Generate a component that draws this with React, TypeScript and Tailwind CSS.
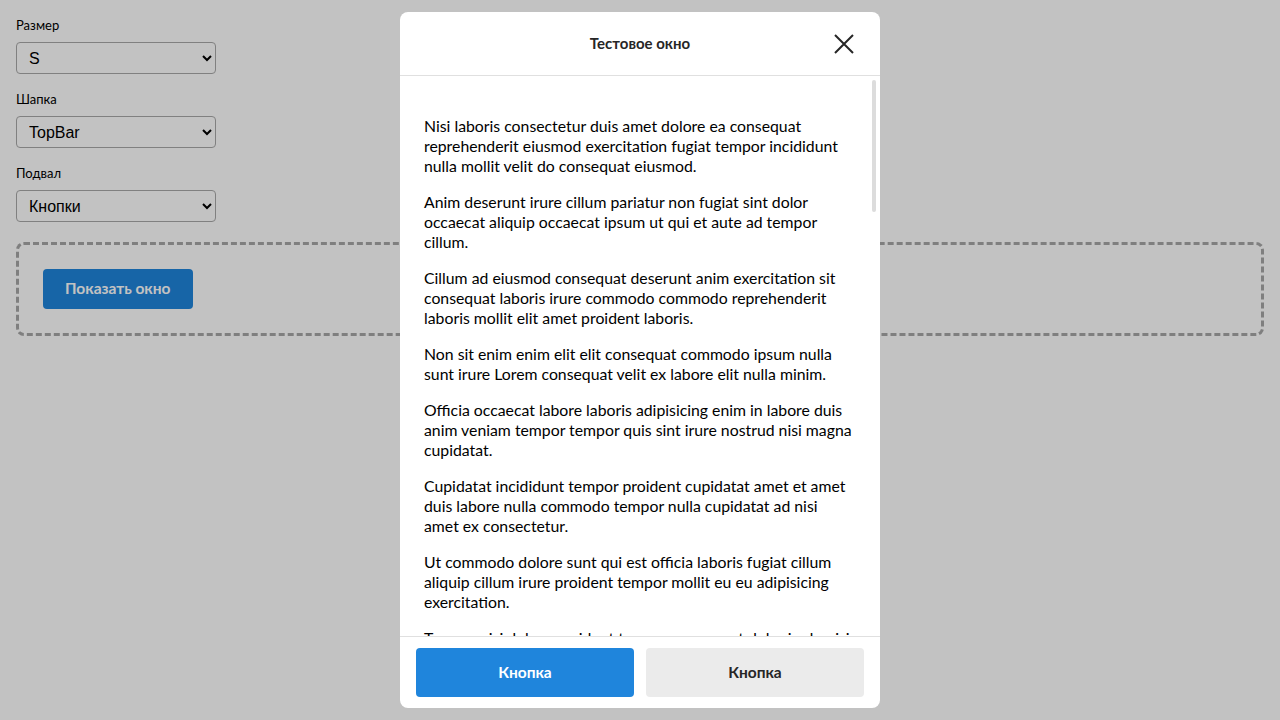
const paragraphs = [
  'Nisi laboris consectetur duis amet dolore ea consequat reprehenderit eiusmod exercitation fugiat tempor incididunt nulla mollit velit do consequat eiusmod.',
  'Anim deserunt irure cillum pariatur non fugiat sint dolor occaecat aliquip occaecat ipsum ut qui et aute ad tempor cillum.',
  'Cillum ad eiusmod consequat deserunt anim exercitation sit consequat laboris irure commodo commodo reprehenderit laboris mollit elit amet proident laboris.',
  'Non sit enim enim elit elit consequat commodo ipsum nulla sunt irure Lorem consequat velit ex labore elit nulla minim.',
  'Officia occaecat labore laboris adipisicing enim in labore duis anim veniam tempor tempor quis sint irure nostrud nisi magna cupidatat.',
  'Cupidatat incididunt tempor proident cupidatat amet et amet duis labore nulla commodo tempor nulla cupidatat ad nisi amet ex consectetur.',
  'Ut commodo dolore sunt qui est officia laboris fugiat cillum aliquip cillum irure proident tempor mollit eu eu adipisicing exercitation.',
  'Tempor nisi dolore proident tempor consequat dolor in do nisi tempor non sit amet.',
  'Excepteur ullamco velit est esse aliqua ea commodo sint fugiat anim.',
];

function Field({ label, value, options }: { label: string; value: string; options: string[] }) {
  return (
    <div className="flex flex-col gap-[8px]">
      <label className="text-[13px] leading-[18px] text-black">{label}</label>
      <select
        defaultValue={value}
        className="w-[200px] h-[32px] rounded-[4px] border border-[#a9a9a9] bg-white px-[8px] text-[16px] text-black"
        style={{ fontFamily: '"Liberation Sans", Arial, sans-serif' }}
      >
        {options.map((o) => (
          <option key={o}>{o}</option>
        ))}
      </select>
    </div>
  );
}

export default function App() {
  const font = { fontFamily: 'Lato, "Noto Sans", sans-serif' };
  return (
    <div className="relative w-[1280px] h-[720px] bg-white overflow-hidden" style={font}>
      {/* page */}
      <div className="flex flex-col gap-[16px] p-[16px]">
        <Field label="Размер" value="S" options={['S', 'M', 'L']} />
        <Field label="Шапка" value="TopBar" options={['TopBar', 'None']} />
        <Field label="Подвал" value="Кнопки" options={['Кнопки', 'None']} />
        <div className="mt-[4px] h-[94px] rounded-[8px] border-[3px] border-dashed border-[#a8a8a8] p-[24px]">
          <button className="h-[40px] rounded-[4px] bg-[#1f85dc] px-[22px] text-[15.5px] font-bold text-white">
            Показать окно
          </button>
        </div>
      </div>

      {/* overlay */}
      <div className="absolute inset-0 flex justify-center bg-black/[0.24] pt-[12px]">
        <div className="flex h-[696px] w-[480px] flex-col overflow-hidden rounded-[8px] bg-white">
          <div className="relative flex h-[64px] shrink-0 items-center justify-center border-b border-[#e0e0e0]">
            <span className="text-[15px] font-bold text-[#262626]">Тестовое окно</span>
            <svg
              className="absolute right-[24px] top-[20px]"
              width="24"
              height="24"
              viewBox="0 0 24 24"
              fill="none"
              stroke="#262626"
              strokeWidth="2"
            >
              <path d="M3 3 L21 21 M21 3 L3 21" />
            </svg>
          </div>
          <div className="relative flex-1 overflow-hidden">
            <div className="flex flex-col gap-[16px] px-[24px] pt-[40px] text-[15.8px] leading-[20px] text-black">
              {paragraphs.map((p, i) => (
                <p key={i}>{p}</p>
              ))}
            </div>
            <div className="absolute right-[4px] top-[4px] h-[132px] w-[4px] rounded-full bg-[#dcdcdc]" />
          </div>
          <div className="flex h-[72px] shrink-0 gap-[12px] border-t border-[#e0e0e0] px-[16px] py-[11px]">
            <button className="flex-1 rounded-[4px] bg-[#1f85dc] text-[15.5px] font-bold text-white">Кнопка</button>
            <button className="flex-1 rounded-[4px] bg-[#ebebeb] text-[15.5px] font-bold text-[#262626]">Кнопка</button>
          </div>
        </div>
      </div>
    </div>
  );
}
